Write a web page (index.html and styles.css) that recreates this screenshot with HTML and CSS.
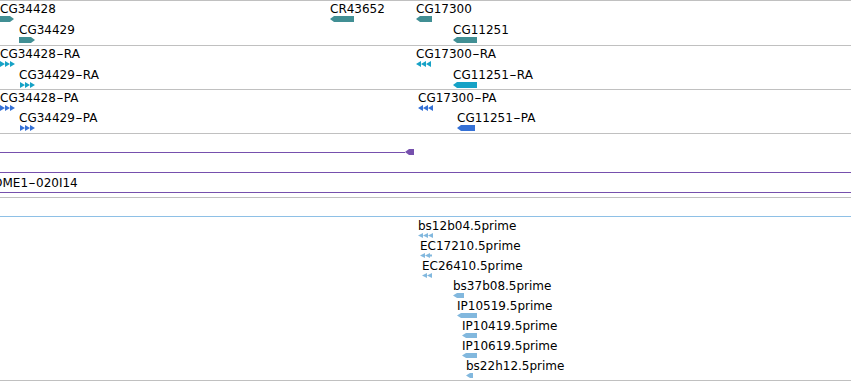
FILE: index.html
```html
<!DOCTYPE html>
<html lang="en">
<head>
    <meta charset="UTF-8">
    <meta name="viewport" content="width=device-width, initial-scale=1.0">
    <title>Genome Browser Tracks</title>
    <link rel="stylesheet" href="styles.css">
</head>
<body>

    <div class="tracks">

        <!-- Genes -->
        <div class="track genes">
            <div class="feat gene" style="left:0;top:1px">
                <span class="name">CG34428</span>
                <div class="bar right" style="width:14px"></div>
            </div>
            <div class="feat gene" style="left:19px;top:22px">
                <span class="name">CG34429</span>
                <div class="bar right" style="width:16px"></div>
            </div>
            <div class="feat gene" style="left:330px;top:1px">
                <span class="name">CR43652</span>
                <div class="bar left" style="width:24px"></div>
            </div>
            <div class="feat gene" style="left:416px;top:1px">
                <span class="name">CG17300</span>
                <div class="bar left" style="width:16px"></div>
            </div>
            <div class="feat gene" style="left:453px;top:22px">
                <span class="name">CG11251</span>
                <div class="bar left" style="width:24px"></div>
            </div>
        </div>

        <!-- Transcripts -->
        <div class="track transcripts">
            <div class="feat rna" style="left:0;top:1px">
                <span class="name">CG34428<span class="dash">-</span>RA</span>
                <svg class="glyph" width="15" height="6"><path d="M0 0L5 3L0 6ZM5 0L10 3L5 6ZM10 0L15 3L10 6Z"/></svg>
            </div>
            <div class="feat rna" style="left:19px;top:22px">
                <span class="name">CG34429<span class="dash">-</span>RA</span>
                <svg class="glyph" width="16" height="6"><path d="M1 0L6 3L1 6ZM6 0L11 3L6 6ZM11 0L16 3L11 6Z"/></svg>
            </div>
            <div class="feat rna" style="left:416px;top:1px">
                <span class="name">CG17300<span class="dash">-</span>RA</span>
                <svg class="glyph" width="16" height="6"><path d="M0 3L5 0L5 6ZM5 3L10 0L10 6ZM10 3L15 0L15 6Z"/></svg>
            </div>
            <div class="feat rna" style="left:453px;top:22px">
                <span class="name">CG11251<span class="dash">-</span>RA</span>
                <div class="bar left" style="width:24px"></div>
            </div>
        </div>

        <!-- Proteins -->
        <div class="track proteins">
            <div class="feat prot" style="left:0;top:1px">
                <span class="name">CG34428<span class="dash">-</span>PA</span>
                <svg class="glyph" width="15" height="6"><path d="M0 0L5 3L0 6ZM5 0L10 3L5 6ZM10 0L15 3L10 6Z"/></svg>
            </div>
            <div class="feat prot" style="left:19px;top:21px">
                <span class="name">CG34429<span class="dash">-</span>PA</span>
                <svg class="glyph" width="16" height="6"><path d="M1 0L6 3L1 6ZM6 0L11 3L6 6ZM11 0L16 3L11 6Z"/></svg>
            </div>
            <div class="feat prot" style="left:418px;top:1px">
                <span class="name">CG17300<span class="dash">-</span>PA</span>
                <svg class="glyph" width="15" height="6"><path d="M0 3L5 0L5 6ZM5 3L10 0L10 6ZM10 3L15 0L15 6Z"/></svg>
            </div>
            <div class="feat prot" style="left:457px;top:21px">
                <span class="name">CG11251<span class="dash">-</span>PA</span>
                <div class="bar left" style="width:18px"></div>
            </div>
        </div>

        <!-- Clones -->
        <div class="track clones">
            <div class="span-line" style="width:405px"></div>
            <div class="span-end" style="left:405px"></div>
            <div class="clone">
                <span class="clone-name">OME1<span class="dash">-</span>020I14</span>
            </div>
        </div>

        <!-- ESTs -->
        <div class="track ests">
            <div class="est-line"></div>
            <div class="feat est" style="left:418px;top:21px">
                <span class="name">bs12b04.5prime</span>
                <svg class="glyph" width="15" height="5"><path d="M0 2.5L5 0L5 5ZM5 2.5L10 0L10 5ZM10 2.5L15 0L15 5Z"/></svg>
            </div>
            <div class="feat est" style="left:420px;top:41px">
                <span class="name">EC17210.5prime</span>
                <svg class="glyph" width="12" height="5"><path d="M0 2.5L5 0L5 5ZM5 2.5L10 0L10 5ZM10 1.5L12 1.5L12 3.5L10 3.5Z"/></svg>
            </div>
            <div class="feat est" style="left:422px;top:61px">
                <span class="name">EC26410.5prime</span>
                <svg class="glyph" width="10" height="5"><path d="M0 2.5L5 0L5 5ZM5 2.5L10 0L10 5Z"/></svg>
            </div>
            <div class="feat est" style="left:453px;top:81px">
                <span class="name">bs37b08.5prime</span>
                <div class="bar left thin" style="width:11px"></div>
            </div>
            <div class="feat est" style="left:457px;top:101px">
                <span class="name">IP10519.5prime</span>
                <div class="bar left thin" style="width:20px"></div>
            </div>
            <div class="feat est" style="left:462px;top:121px">
                <span class="name">IP10419.5prime</span>
                <div class="bar left thin" style="width:15px"></div>
            </div>
            <div class="feat est" style="left:462px;top:141px">
                <span class="name">IP10619.5prime</span>
                <div class="bar left thin" style="width:15px"></div>
            </div>
            <div class="feat est" style="left:466px;top:161px">
                <span class="name">bs22h12.5prime</span>
                <div class="bar left thin" style="width:7px"></div>
            </div>
        </div>

    </div>

</body>
</html>
```

FILE: styles.css
```css
body {
    margin: 0;
    font-family: "DejaVu Sans", sans-serif;
    font-size: 12px;
    line-height: 14px;
    color: #000;
    background-color: #fff;
    overflow: hidden;
}
.tracks {
    border-top: 1px solid #c0c0c0;
}
.track {
    position: relative;
    border-bottom: 1px solid #c0c0c0;
    overflow: hidden;
}
.genes {
    height: 44px;
}
.transcripts,
.proteins {
    height: 43px;
}
.clones {
    height: 63px;
}
.ests {
    height: 182px;
}

/* Features */
.feat {
    position: absolute;
}
.feat .name {
    display: block;
    white-space: nowrap;
    color: #000;
}
.dash {
    display: inline-block;
    width: 8px;
    text-align: center;
    transform: scaleX(1.7);
}
.glyph {
    display: block;
    fill: currentColor;
}
.bar {
    height: 6px;
    background: currentColor;
}
.bar.thin {
    height: 5px;
}
.bar.right {
    clip-path: polygon(0 0, calc(100% - 4px) 0, 100% 50%, calc(100% - 4px) 100%, 0 100%);
}
.bar.left {
    clip-path: polygon(0 50%, 4px 0, 100% 0, 100% 100%, 4px 100%);
}
.gene {
    color: #418f94;
}
.rna {
    color: #16a2c6;
}
.prot {
    color: #3571d6;
}
.est {
    color: #82b8de;
}

/* Clone track */
.span-line {
    position: absolute;
    left: 0;
    top: 18px;
    height: 1px;
    background: #7650ad;
}
.span-end {
    position: absolute;
    top: 15px;
    width: 9px;
    height: 6px;
    background: #7650ad;
    clip-path: polygon(0 50%, 4px 0, 100% 0, 100% 100%, 4px 100%);
}
.clone {
    position: absolute;
    top: 38px;
    left: -10px;
    right: -10px;
    height: 16px;
    border-top: 1px solid #7650ad;
    border-bottom: 1px solid #7650ad;
    padding: 3px 0 0 3px;
    white-space: nowrap;
}
.est-line {
    position: absolute;
    left: 0;
    right: 0;
    top: 18px;
    height: 1px;
    background: #8ec0e6;
}
```
